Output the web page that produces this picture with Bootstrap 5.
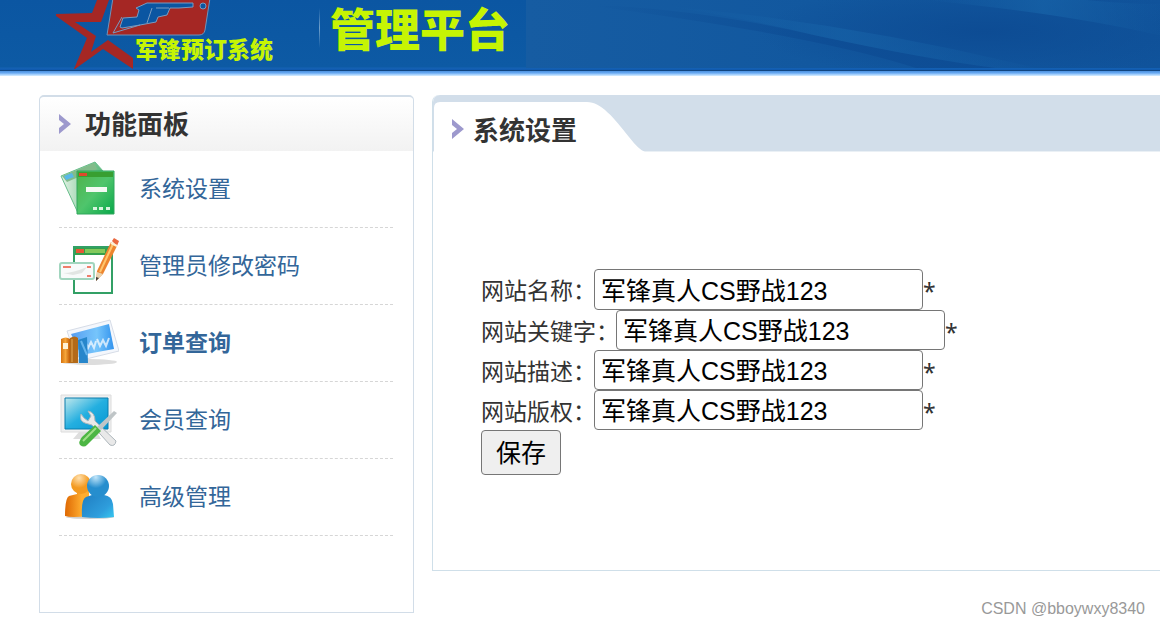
<!DOCTYPE html>
<html lang="zh-CN">
<head>
<meta charset="utf-8">
<meta name="viewport" content="width=device-width, initial-scale=1">
<title>管理平台</title>
<link href="https://cdn.jsdelivr.net/npm/bootstrap@5.3.0/dist/css/bootstrap.min.css" rel="stylesheet">
<style>
  body { font-family: "Liberation Sans", "Noto Sans CJK SC", sans-serif; color: #333; background: #fff; }
  .top-bar { height: 76px; padding-left: 39px; background: linear-gradient(#0b56a2, #0d5aa4 67px, #1562b4 68px, #0f59ae 70px, #0b3d75 70px, #174f8d 71px, #4b91df 71px, #69aaf2 73px, #91c4fa 74px, #d9efff 76px); overflow: hidden; }
  .beams { left: 526px; top: 0; width: calc(100% - 526px); height: 68px; }
  .emblem { width: 180px; height: 70px; left: 16px; top: 0; }
  .brand-zone { width: 280px; height: 76px; }
  .brand-name { left: 96px; top: 33px; font-size: 23px; line-height: 34px; font-weight: 900; color: #c6f404; white-space: nowrap; }
  .divider { width: 1px; height: 40px; background: linear-gradient(transparent, #71a1cc, transparent); margin-top: 8px; }
  .platform { font-size: 45px; line-height: 64px; font-weight: 900; color: #c6f404; margin-left: 10px; }
  .shell { padding-left: 39px; gap: 18px; margin-top: 19px; }
  .side { flex: 0 0 375px; min-height: 518px; border: 1px solid #d2dde8; border-top-width: 2px; border-radius: 5px 5px 0 0; align-self: flex-start; }
  .side-head { height: 54px; padding-left: 17px; gap: 12px; background: linear-gradient(#fff, #f2f2f2); border-radius: 5px 5px 0 0; }
  .head-text { font-size: 26px; line-height: 36px; font-weight: 700; margin: 0; padding-top: 2px; color: #333; }
  .side-list { padding: 0 20px 0 19px; }
  .side-list li { height: 77px; border-bottom: 1px dashed #d6d6d6; }
  .side-list a { color: #336699; font-size: 23px; line-height: 34px; gap: 20px; height: 76px; text-decoration: none; }
  .side-list svg { width: 60px; height: 60px; flex: none; }
  .main-panel { min-height: 476px; border: 1px solid #cfdfe9; border-width: 0 0 1px 1px; border-radius: 7px 0 0 0; }
  .main-head { height: 57px; background: linear-gradient(#d2deea 56px, #eaf0f5 56px); border-radius: 7px 0 0 0; }
  .tab-shape { left: 0; top: 0; width: 220px; height: 60px; }
  .tab-title { left: 18px; top: 16px; gap: 8px; }
  .settings { padding: 117px 0 0 48px; }
  .field-row { height: 40px; font-size: 23px; line-height: 44px; }
  .first-row { height: 41px; }
  .field-row label { width: 113px; white-space: nowrap; }
  .field-row label.wide { width: 135px; }
  .required-mark { font-family: "Noto Sans", sans-serif; }
  .site-box { width: 329px; height: 100%; border: 1px solid #767676; border-radius: 4px; padding: 0 6px 2px; font-size: 25px; color: #000; background: #fff; }
  .save-btn { width: 80px; height: 45px; border: 1px solid #767676; border-radius: 4px; padding: 0; font-size: 25px; line-height: 40px; background: #efefef; color: #000; }
  .credit { font-size: 16px; line-height: 24px; color: #999; padding: 26px 15px 0 0; margin: 0; }
</style>
</head>
<body>
<header class="top-bar d-flex position-relative">
  <svg class="beams position-absolute" viewBox="0 0 634 69" preserveAspectRatio="none" aria-hidden="true">
    <defs>
      <linearGradient id="base" x1="0" x2="1"><stop offset="0" stop-color="#165ca2"/><stop offset=".45" stop-color="#12589f"/><stop offset="1" stop-color="#10539b"/></linearGradient>
      <radialGradient id="pool"><stop offset="0" stop-color="#0d4c94"/><stop offset="1" stop-color="#0d4c94" stop-opacity="0"/></radialGradient>
      <linearGradient id="ray" x1="0" x2="1"><stop offset="0" stop-color="#0d4c94" stop-opacity="0"/><stop offset=".6" stop-color="#0d4c94"/><stop offset="1" stop-color="#0d4c94"/></linearGradient>
      <linearGradient id="glow" x1="0" y1="0" x2="1" y2="0"><stop offset="0" stop-color="#1763a8" stop-opacity="0"/><stop offset=".5" stop-color="#1763a8"/><stop offset="1" stop-color="#1763a8" stop-opacity=".1"/></linearGradient>
    </defs>
    <path fill="url(#base)" d="M0 0h634v69H0z"/>
    <ellipse cx="460" cy="32" rx="230" ry="48" fill="url(#pool)"/>
    <path fill="url(#ray)" d="M60 5Q170 8 290 36Q400 60 470 69H390Q290 36 60 5Z" opacity=".8"/>
    <path fill="url(#glow)" d="M130 5Q320 22 510 69H470Q400 60 290 36Q210 16 130 5Z" opacity=".6"/>
    <path fill="url(#glow)" d="M400 0H560Q600 4 634 4V36Q540 14 400 0Z" opacity=".7"/>
  </svg>
  <div class="brand-zone position-relative">
    <svg class="emblem position-absolute" viewBox="0 0 180 70" aria-hidden="true">
      <path fill="#a52724" d="M42 0H54L46 22L20 22L41 36L36 52L53 40L78 58V69L48 49L20 69H19L32 38L1 16V14L37 13Z"/>
      <path fill="#a52724" stroke="#6f93ba" stroke-width="1" d="M58-2H155L150 30Q149 35 144 35H52Z"/>
      <path fill="#0b56a2" stroke="#789bc1" stroke-width="1" d="M65 27L68 18L82 17L84 10L81 8L92 3L138 3V7L124 8L115 8L112 15L103 17L101 22L85 25L67 28Z"/>
      <path fill="none" stroke="#789bc1" d="M58 33L67 17M58 33L85 25M97 8L92 23M101 8H114"/>
      <circle cx="148" cy="6" r="3" fill="#0b56a2" stroke="#789bc1"/>
    </svg>
    <span class="brand-name position-absolute">军锋预订系统</span>
  </div>
  <div class="divider position-relative"></div>
  <div class="platform position-relative">管理平台</div>
</header>

<div class="shell d-flex">
  <aside class="side">
    <div class="side-head d-flex align-items-center">
      <svg width="16" height="24" viewBox="0 0 16 24" aria-hidden="true"><path d="M2 2L14 12L2 22V16L7 12L2 8Z" fill="#9d99cd"/></svg>
      <h2 class="head-text">功能面板</h2>
    </div>
    <ul class="side-list list-unstyled mb-0">
      <li><a href="#" class="d-flex align-items-center">
        <svg viewBox="0 0 60 60" aria-hidden="true">
          <defs><linearGradient id="gr" x1="0" y1="0" x2="1" y2="1"><stop stop-color="#4fb14a"/><stop offset=".5" stop-color="#4fc56c"/><stop offset="1" stop-color="#08a849"/></linearGradient><linearGradient id="pale" x2="1"><stop stop-color="#e4f2e6"/><stop offset="1" stop-color="#57b979"/></linearGradient></defs>
          <path d="M2 17L36 3L44 12V49L19 54Z" fill="url(#pale)" stroke="#68be8b"/>
          <path d="M3 17L35 4L38 10L8 23Z" fill="#82bc8a"/><path d="M5 17l8-3 2 4-8 3z" fill="#58b9e8"/>
          <path d="M18 12H55V55H18Z" fill="url(#gr)" stroke="#31a65d"/>
          <path d="M19 13H54V18H19Z" fill="#389f31"/><path d="M20 14H28V17H20Z" fill="#df492c"/>
          <path d="M27 28H48V33H27Z" fill="#f3faf4"/><path d="M34 48h4v3h-4zm6 0h4v3h-4zm7 0h4v3h-4z" fill="#d9f4df"/>
        </svg><span>系统设置</span></a></li>
      <li><a href="#" class="d-flex align-items-center">
        <svg viewBox="0 0 60 60" aria-hidden="true">
          <path d="M15 11H53V57H15Z" fill="#fff" stroke="#32a065" stroke-width="2"/><path d="M16 12H53V19H16Z" fill="#35a04c"/><path d="M17 13h8v4h-8z" fill="#e75837"/><path d="M26 13h20v4H26z" fill="#83c95c"/>
          <rect x="1" y="27" width="34" height="16" rx="2" fill="#f8fafa" stroke="#a1d5be" stroke-width="2"/><path d="M4 37q10 0 24-6l-5 6-9 2z" fill="#e2e5e3"/><path d="M4 30h8v2H4zm24 0h4v2h-4zm0 9h4v2h-4z" fill="#ef7e6c"/>
          <path d="M52 6L38 35L37 45L44 38L58 10Z" fill="#ed852f"/><path d="M54 8L41 36" stroke="#ffc66d" stroke-width="2"/><path d="M53 5L55 2L60 5L58 10Z" fill="#ea6940"/><path d="M52 7L58 10" stroke="#fbf1d5" stroke-width="2"/><path d="M38 36L37 45L44 38Z" fill="#e8d4b2"/><path d="M37 41V45L40 42Z" fill="#443d36"/>
        </svg><span>管理员修改密码</span></a></li>
      <li><a href="#" class="d-flex align-items-center fw-bold">
        <svg viewBox="0 0 60 60" aria-hidden="true">
          <defs><linearGradient id="sky" x2="1"><stop stop-color="#579ef1"/><stop offset=".6" stop-color="#76c5fb"/><stop offset="1" stop-color="#3293ee"/></linearGradient><linearGradient id="org" x2="1"><stop stop-color="#d6730e"/><stop offset=".5" stop-color="#f5a53a"/><stop offset="1" stop-color="#c15b05"/></linearGradient></defs>
          <ellipse cx="30" cy="49" rx="28" ry="3" fill="#bbb" opacity=".5"/>
          <path d="M8 18L51 7L60 38L27 46L16 42Z" fill="#f4f7fc" stroke="#d6dce7"/>
          <path d="M12 21L50 11L55 36L22 42Z" fill="url(#sky)"/><path d="M26 28l3 7 3-6 3 6 2-7M38 26l3 7 3-6 3 6 3-8" fill="none" stroke="#fff" stroke-width="2" opacity=".7"/>
          <path d="M19 27l9-3 1 26h-9z" fill="#2786cb"/><path d="M22 28l6 14" stroke="#65b4ec" stroke-width="2"/><path d="M2 26q5-3 9 0v24H2z" fill="url(#org)"/><path d="M11 25q5-3 8 0v25h-8z" fill="#b36a18"/><path d="M4 30h5v6H4z" fill="#fff1d5"/><path d="M13 26v23" stroke="#e6aa55"/>
        </svg><span>订单查询</span></a></li>
      <li><a href="#" class="d-flex align-items-center">
        <svg viewBox="0 0 60 60" aria-hidden="true">
          <defs><linearGradient id="screen" x1="0" y1="0" x2="1" y2="1"><stop stop-color="#c0e8ec"/><stop offset=".5" stop-color="#24afe0"/><stop offset="1" stop-color="#0797d2"/></linearGradient></defs>
          <path d="M2 5H52V42H2Z" fill="#f0f0f0" stroke="#dcdcdc"/><path d="M20 42H38L42 49H14Z" fill="#dedede"/>
          <path d="M6 8H49V39H6Z" fill="url(#screen)" stroke="#0b7dac"/>
          <path d="M22 24Q20 31 26 33L33 35L51 55Q56 57 57 51L36 31Q36 22 29 21L32 26L29 31L25 28Z" fill="#e9e9e9" stroke="#aeb7bc"/>
          <path d="M55 21L58 23L42 40L38 37Z" fill="#bfc5c7"/><path d="M36 35L42 41L28 55Q25 58 21 55Q19 52 23 47Z" fill="#4cb644"/><path d="M37 38L24 51" stroke="#a0df89" stroke-width="2"/>
        </svg><span>会员查询</span></a></li>
      <li><a href="#" class="d-flex align-items-center">
        <svg viewBox="0 0 60 60" aria-hidden="true">
          <defs><radialGradient id="oh" cx=".4" cy=".2"><stop stop-color="#ffe0ae"/><stop offset="1" stop-color="#f39a20"/></radialGradient><radialGradient id="bh" cx=".4" cy=".1"><stop stop-color="#c2e6fa"/><stop offset="1" stop-color="#268ece"/></radialGradient><linearGradient id="bb" x1="0" x2="1" y2="1"><stop stop-color="#1d78bd"/><stop offset=".7" stop-color="#2e9ddc"/><stop offset="1" stop-color="#37c8f0"/></linearGradient><linearGradient id="ob" x2="1"><stop stop-color="#de6803"/><stop offset=".7" stop-color="#ffad2f"/></linearGradient></defs>
          <ellipse cx="31" cy="50" rx="24" ry="2" fill="#bbb" opacity=".7"/>
          <path d="M6 49Q6 31 10 29L18 27V21H30V49Q12 51 6 49Z" fill="url(#ob)"/><circle cx="22" cy="17" r="10" fill="url(#oh)"/>
          <path d="M23 50Q22 32 27 30L33 28V22H45V28Q53 29 54 37L55 50Q40 52 23 50Z" fill="url(#bb)"/><circle cx="39" cy="19" r="11" fill="url(#bh)"/>
        </svg><span>高级管理</span></a></li>
    </ul>
  </aside>

  <div class="flex-grow-1">
    <main class="main-panel">
      <div class="main-head position-relative">
        <svg class="tab-shape position-absolute" viewBox="0 0 220 60" aria-hidden="true"><path fill="#fff" d="M1 60V13Q1 7 7 7H154C168 7 181 23 196 42Q206 55 212 57V60Z"/></svg>
        <div class="tab-title position-absolute d-flex align-items-center">
          <svg width="14" height="24" viewBox="0 0 14 24" aria-hidden="true"><path d="M1 1L13 11L1 21V15L6 11L1 7Z" fill="#9d99cd"/></svg>
          <h1 class="head-text">系统设置</h1>
        </div>
      </div>
      <form class="settings">
        <div class="field-row first-row d-flex"><label for="site-name">网站名称：</label><input class="site-box" id="site-name" type="text" value="军锋真人CS野战123"><span class="required-mark">*</span></div>
        <div class="field-row d-flex"><label class="wide" for="site-key">网站关键字：</label><input class="site-box" id="site-key" type="text" value="军锋真人CS野战123"><span class="required-mark">*</span></div>
        <div class="field-row d-flex"><label for="site-desc">网站描述：</label><input class="site-box" id="site-desc" type="text" value="军锋真人CS野战123"><span class="required-mark">*</span></div>
        <div class="field-row d-flex"><label for="site-copy">网站版权：</label><input class="site-box" id="site-copy" type="text" value="军锋真人CS野战123"><span class="required-mark">*</span></div>
        <button class="save-btn" type="button">保存</button>
      </form>
    </main>
    <p class="credit text-end">CSDN @bboywxy8340</p>
  </div>
</div>
<script src="https://cdn.jsdelivr.net/npm/bootstrap@5.3.0/dist/js/bootstrap.bundle.min.js"></script>
</body>
</html>
